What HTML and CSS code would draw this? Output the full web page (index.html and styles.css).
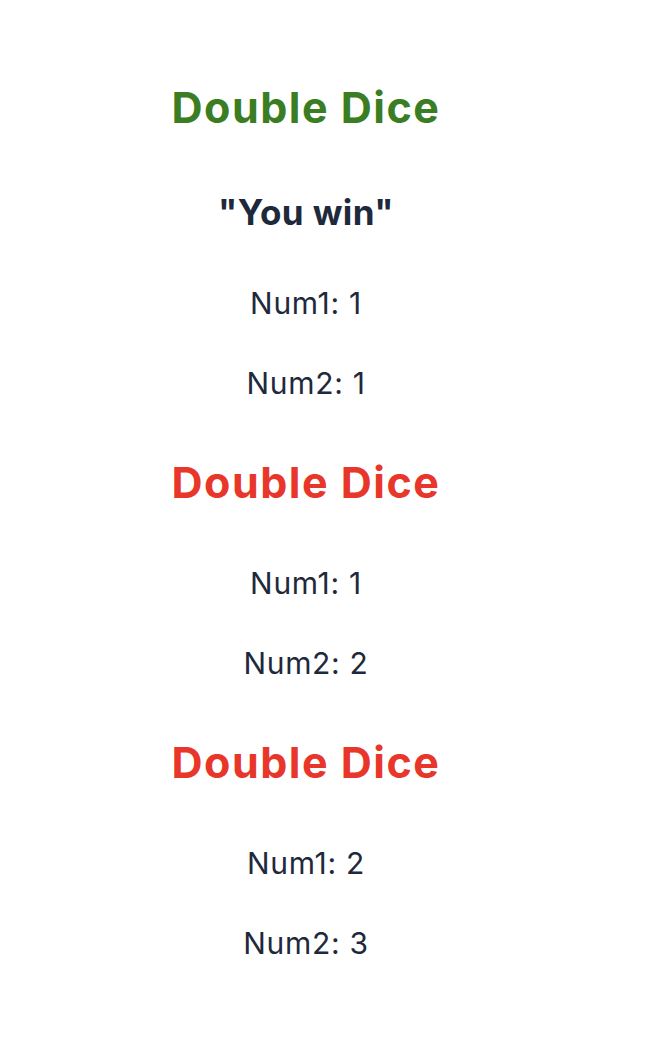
FILE: index.html
```html
<!DOCTYPE html>
<html lang="en">
<head>
<meta charset="utf-8">
<title>Double Dice</title>
<link rel="stylesheet" href="styles.css">
</head>
<body>
<main class="app">
  <section class="game">
    <h1 class="title title-win">Double Dice</h1>
    <h2 class="result">"You win"</h2>
    <p class="num">Num1: 1</p>
    <p class="num">Num2: 1</p>
  </section>
  <section class="game">
    <h1 class="title title-lose">Double Dice</h1>
    <p class="num">Num1: 1</p>
    <p class="num">Num2: 2</p>
  </section>
  <section class="game">
    <h1 class="title title-lose">Double Dice</h1>
    <p class="num">Num1: 2</p>
    <p class="num">Num2: 3</p>
  </section>
</main>
</body>
</html>
```

FILE: styles.css
```css
html, body {
  margin: 0;
  padding: 0;
  background: #ffffff;
}

body {
  font-family: Inter, "Noto Sans", sans-serif;
  color: #1e293b;
}

.app {
  width: 612px;
  padding-top: 28px;
  text-align: center;
}

.title {
  font-size: 43px;
  line-height: 52px;
  font-weight: 700;
  letter-spacing: 1.5px;
  margin: 53px 0 55px;
}

.title-win {
  color: #3a7d22;
}

.title-lose {
  color: #e8372a;
}

.result {
  font-size: 35px;
  line-height: 44px;
  font-weight: 700;
  letter-spacing: 0.4px;
  margin: 57px 0 48.5px;
  color: #1e293b;
}

.num {
  font-size: 30px;
  line-height: 40px;
  letter-spacing: 0.7px;
  margin: 40px 0;
}
```
